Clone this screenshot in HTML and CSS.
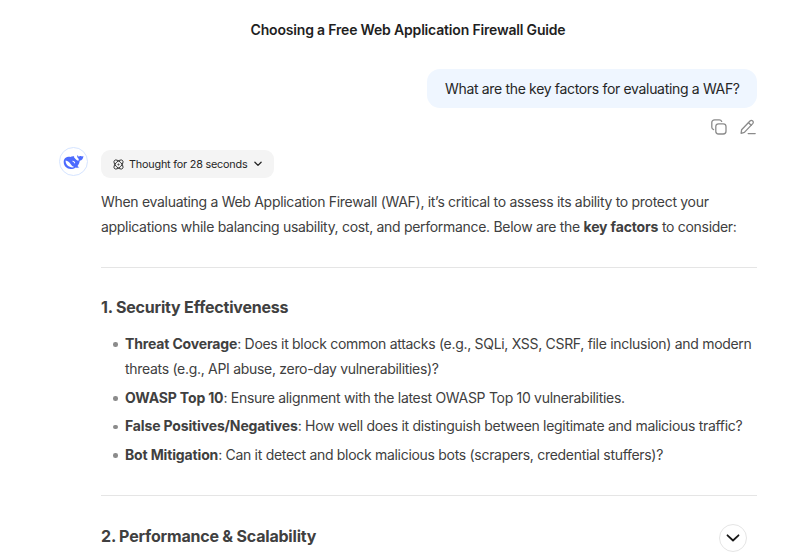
FILE: index.html
```html
<!DOCTYPE html>
<html lang="en">
<head>
    <meta charset="UTF-8">
    <meta name="viewport" content="width=device-width, initial-scale=1.0">
    <title>Choosing a Free Web Application Firewall Guide</title>
    <link rel="stylesheet" href="styles.css">
</head>
<body>
    <div class="chat">
        <header class="chat-title">Choosing a Free Web Application Firewall Guide</header>

        <div class="question">
            <div class="bubble">What are the key factors for evaluating a WAF?</div>
            <div class="actions">
                <svg width="16" height="16" viewBox="0 0 16 16" fill="none" stroke="#8b8b8b" stroke-width="1.3" stroke-linecap="round">
                    <rect x="4.8" y="4.8" width="10.2" height="10.2" rx="2.8"/>
                    <path d="M2.6 10.6C1.4 10.200.8 9.500.8 8.300V3.600C.8 2 1.900.8 3.600.8h4.700c1.200 0 2 .6 2.400 1.600"/>
                </svg>
                <svg width="16" height="16" viewBox="0 0 16 16" fill="none" stroke="#8b8b8b" stroke-width="1.3" stroke-linejoin="round" stroke-linecap="round">
                    <path d="M1.100 14.400l.5-3.600 8.400-8.800c.8-.8 1.900-.8 2.700-.1s.7 1.900 0 2.700L4.400 13.400z"/>
                    <path d="M8.500 3.700l2.700 2.600M8.200 14.600h7"/>
                </svg>
            </div>
        </div>

        <div class="answer">
            <div class="avatar">
                <svg width="21" height="16" viewBox="0 0 21 16">
                    <path fill="#4d6bfe" d="M20.400 2c-.9.500-1.700.5-2.500.1-.9-.2-1.700.1-2.200.7-.3-.8-.8-1.300-1.500-1.600-.2 1.500.2 2.700 1.400 3.500.3.900.1 1.500-.4 2.100-1.600-.6-2.900-1.900-4-3.300-.4-.5-.3-.9.100-1.200-1.500-.3-2.800 0-4 .6C3.400 2.600.7 4.500.7 7.900c0 4 3.200 7 7 7 2 0 3.600-.5 4.900-1.500 1.200.5 2.600.5 3.700-.1-.8-.2-1.400-.7-1.800-1.300 1.300-1.500 2-3.300 2.200-5.300 2.300-.4 3.600-2.100 3.700-4.700z"/>
                    <path fill="#fff" d="M2.600 6.600c2.300.3 3.800 1.800 5 3.500 1 1.500 2.100 2.600 3.600 3-3.700 1.200-8.900-1.400-8.600-6.500z"/>
                    <path fill="#fff" d="M9.400 6.700c1.500-.1 2.800.9 2.800 2.300l-.9.500c-.1-1.100-.9-1.800-1.900-2z"/>
                </svg>
            </div>
            <div class="content">
                <div class="thought">
                    <svg width="11" height="11" viewBox="0 0 11 11" fill="none" stroke="#262626" stroke-width=".9">
                        <ellipse cx="5.500" cy="5.500" rx="5.700" ry="2.900" transform="rotate(45 5.500 5.500)"/>
                        <ellipse cx="5.500" cy="5.500" rx="5.700" ry="2.900" transform="rotate(-45 5.500 5.500)"/>
                        <circle cx="5.500" cy="5.500" r=".6"/>
                    </svg>
                    <span>Thought for 28 seconds</span>
                    <svg width="8" height="6" viewBox="0 0 8 6" fill="none" stroke="#262626" stroke-width="1.300" stroke-linecap="round" stroke-linejoin="round">
                        <path d="M.9 1.200L4 4.400l3.100-3.200"/>
                    </svg>
                </div>

                <p>When evaluating a Web Application Firewall (WAF), it’s critical to assess its ability to protect your applications while balancing usability, cost, and performance. Below are the <strong>key factors</strong> to consider:</p>
                <hr>
                <h3>1. Security Effectiveness</h3>
                <ul>
                    <li><strong>Threat Coverage</strong>: Does it block common attacks (e.g., SQLi, XSS, CSRF, file inclusion) and modern threats (e.g., API abuse, zero-day vulnerabilities)?</li>
                    <li><strong>OWASP Top 10</strong>: Ensure alignment with the latest OWASP Top 10 vulnerabilities.</li>
                    <li><strong>False Positives/Negatives</strong>: How well does it distinguish between legitimate and malicious traffic?</li>
                    <li><strong>Bot Mitigation</strong>: Can it detect and block malicious bots (scrapers, credential stuffers)?</li>
                </ul>
                <hr>
                <h3>2. Performance &amp; Scalability</h3>
            </div>
        </div>
    </div>

    <div class="scroll-down">
        <svg width="14" height="8" viewBox="0 0 14 8" fill="none" stroke="#171717" stroke-width="1.800" stroke-linecap="round" stroke-linejoin="round">
            <path d="M1.500 1.300L7 6.500l5.500-5.200"/>
        </svg>
    </div>
</body>
</html>
```
FILE: styles.css
```css
* {
    box-sizing: border-box;
}
body {
    margin: 0;
    height: 556px;
    overflow: hidden;
    background-color: #fff;
    color: #404040;
    font-family: Inter, "Liberation Sans", sans-serif;
    font-size: 14px;
    line-height: 25.3px;
    letter-spacing: -0.3px;
}
.chat {
    width: 698px;
    margin-left: 59px;
}
.chat-title {
    padding-top: 17px;
    text-align: center;
    font-weight: 600;
    letter-spacing: -0.18px;
    color: #1f1f1f;
}
.question {
    display: flex;
    flex-direction: column;
    align-items: flex-end;
    padding-top: 27px;
}
.bubble {
    width: 330px;
    height: 39px;
    padding: 7px 0 0 18px;
    border-radius: 13px;
    background-color: #eff6ff;
    color: #262626;
    letter-spacing: -0.33px;
    white-space: nowrap;
}
.actions {
    display: flex;
    gap: 13px;
    height: 16px;
    margin: 11px 1px 0 0;
}
.answer {
    display: flex;
    gap: 13px;
    margin-top: 12px;
}
.avatar {
    display: flex;
    align-items: center;
    justify-content: center;
    flex: none;
    width: 29px;
    height: 29px;
    border: 1px solid #d5e4ff;
    border-radius: 50%;
}
.content {
    width: 656px;
    padding-top: 3px;
}
.thought {
    display: flex;
    align-items: center;
    width: 173px;
    height: 28px;
    padding-left: 12px;
    border-radius: 9px;
    background-color: #f4f4f4;
    color: #262626;
    font-size: 10.8px;
    letter-spacing: -0.19px;
}
.thought span {
    margin: 0 6px 0 5px;
}
p {
    margin: 10.4px 0 27.6px;
}
strong {
    font-weight: 650;
    letter-spacing: -0.15px;
}
hr {
    height: 1px;
    margin: 0;
    border: none;
    background-color: #e5e5e5;
}
h3 {
    margin: 27.4px 0 11.6px;
    font-size: 16px;
    font-weight: 650;
    line-height: 24px;
    letter-spacing: -0.2px;
}
ul {
    margin: 0 0 28px;
    padding-left: 24px;
    list-style: none;
}
li + li {
    margin-top: 3.3px;
}
li::before {
    content: "";
    display: inline-block;
    width: 4.5px;
    height: 4.5px;
    margin: 0 7.5px 2px -12px;
    border-radius: 50%;
    background-color: #8b8b8b;
}
.scroll-down {
    position: absolute;
    left: 719px;
    top: 524px;
    display: flex;
    align-items: center;
    justify-content: center;
    width: 28px;
    height: 28px;
    border: 1px solid #e5e5e5;
    border-radius: 50%;
    background-color: #fff;
}
```
